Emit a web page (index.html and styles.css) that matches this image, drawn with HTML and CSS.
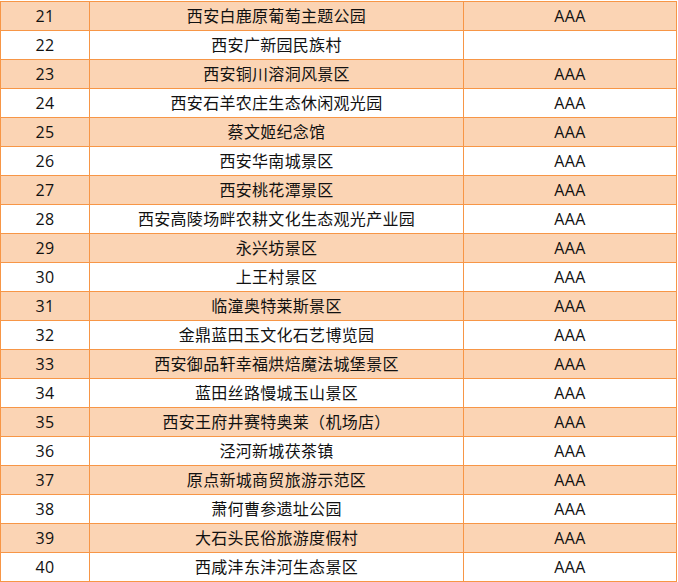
FILE: index.html
```html
<!DOCTYPE html>
<html lang="zh-CN">
<head>
<meta charset="utf-8">
<title>景区名单</title>
<link rel="stylesheet" href="styles.css">
</head>
<body>
<div class="sheet">
  <div class="row shade"><div class="cell">21</div><div class="cell">西安白鹿原葡萄主题公园</div><div class="cell">AAA</div></div>
  <div class="row"><div class="cell">22</div><div class="cell">西安广新园民族村</div><div class="cell"></div></div>
  <div class="row shade"><div class="cell">23</div><div class="cell">西安铜川溶洞风景区</div><div class="cell">AAA</div></div>
  <div class="row"><div class="cell">24</div><div class="cell">西安石羊农庄生态休闲观光园</div><div class="cell">AAA</div></div>
  <div class="row shade"><div class="cell">25</div><div class="cell">蔡文姬纪念馆</div><div class="cell">AAA</div></div>
  <div class="row"><div class="cell">26</div><div class="cell">西安华南城景区</div><div class="cell">AAA</div></div>
  <div class="row shade"><div class="cell">27</div><div class="cell">西安桃花潭景区</div><div class="cell">AAA</div></div>
  <div class="row"><div class="cell">28</div><div class="cell">西安高陵场畔农耕文化生态观光产业园</div><div class="cell">AAA</div></div>
  <div class="row shade"><div class="cell">29</div><div class="cell">永兴坊景区</div><div class="cell">AAA</div></div>
  <div class="row"><div class="cell">30</div><div class="cell">上王村景区</div><div class="cell">AAA</div></div>
  <div class="row shade"><div class="cell">31</div><div class="cell">临潼奥特莱斯景区</div><div class="cell">AAA</div></div>
  <div class="row"><div class="cell">32</div><div class="cell">金鼎蓝田玉文化石艺博览园</div><div class="cell">AAA</div></div>
  <div class="row shade"><div class="cell">33</div><div class="cell">西安御品轩幸福烘焙魔法城堡景区</div><div class="cell">AAA</div></div>
  <div class="row"><div class="cell">34</div><div class="cell">蓝田丝路慢城玉山景区</div><div class="cell">AAA</div></div>
  <div class="row shade"><div class="cell">35</div><div class="cell">西安王府井赛特奥莱（机场店）</div><div class="cell">AAA</div></div>
  <div class="row"><div class="cell">36</div><div class="cell">泾河新城茯茶镇</div><div class="cell">AAA</div></div>
  <div class="row shade"><div class="cell">37</div><div class="cell">原点新城商贸旅游示范区</div><div class="cell">AAA</div></div>
  <div class="row"><div class="cell">38</div><div class="cell">萧何曹参遗址公园</div><div class="cell">AAA</div></div>
  <div class="row shade"><div class="cell">39</div><div class="cell">大石头民俗旅游度假村</div><div class="cell">AAA</div></div>
  <div class="row"><div class="cell">40</div><div class="cell">西咸沣东沣河生态景区</div><div class="cell">AAA</div></div>
</div>
</body>
</html>
```

FILE: styles.css
```css
html, body {
  margin: 0;
  padding: 0;
  background: #ffffff;
}
body {
  padding-top: 1px;
  border-top: 0;
  font-family: "Open Sans", "Noto Sans CJK SC", sans-serif;
  font-size: 16px;
  color: #111111;
}
.sheet {
  width: 677px;
  box-sizing: border-box;
  border-left: 1px solid #f79646;
  border-top: 1px solid #f79646;
}
.row {
  display: grid;
  grid-template-columns: 89px 374px 213px;
  height: 29px;
}
.row.shade {
  background: #fbd4b4;
}
.cell {
  box-sizing: border-box;
  border-right: 1px solid #f79646;
  border-bottom: 1px solid #f79646;
  display: flex;
  align-items: center;
  justify-content: center;
  white-space: nowrap;
  line-height: 1;
  letter-spacing: 0.3px;
}
```
